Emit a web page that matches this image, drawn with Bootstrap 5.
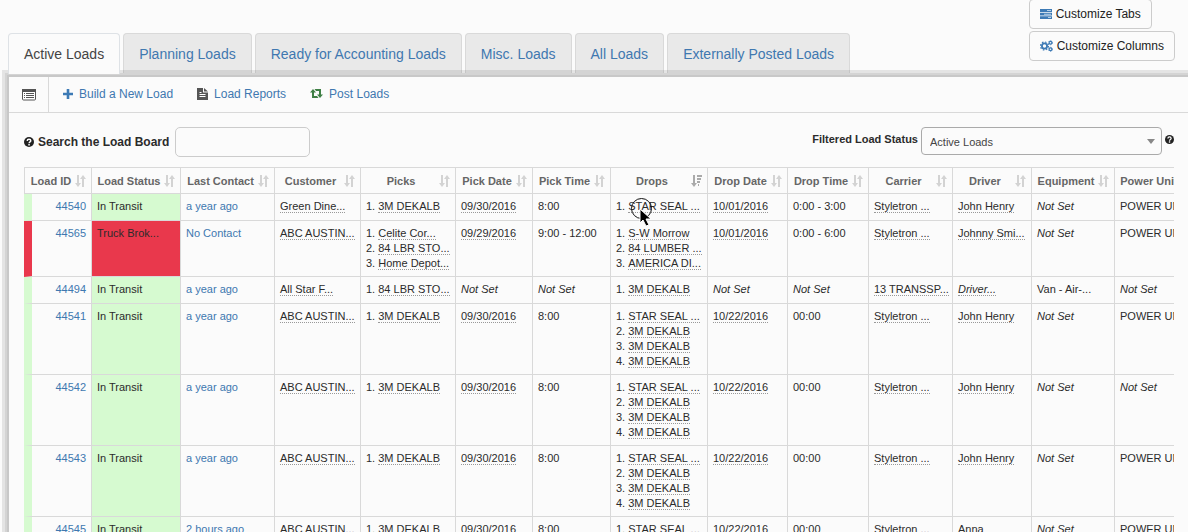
<!DOCTYPE html>
<html lang="en">
<head>
<meta charset="utf-8">
<meta name="viewport" content="width=device-width, initial-scale=1">
<title>Load Board</title>
<link rel="stylesheet" href="https://cdn.jsdelivr.net/npm/bootstrap@5.3.0/dist/css/bootstrap.min.css">
<style>
:root { --line: #d9d9d9; --link: #4078b0; --ink: #2b2b2b; --paper: #fbfbfb; }
body { font: 12px/16px "Liberation Sans", Arial, sans-serif; color: var(--ink); background: var(--paper); height: 100vh; overflow: hidden; }
a { color: var(--link); text-decoration: none; }
.board-head { margin-top: -1px; padding: 0 13px 0 8px; }
.board-tabs { gap: 3px; border: 0; padding-top: 34px; }
.board-tabs .nav-link { font-size: 14px; line-height: 20px; padding: 10px 15px 12px; margin: 0; color: var(--link); background: #e9e9e9; border: 1px solid var(--line); border-bottom: 0; border-radius: 4px 4px 0 0; }
.board-tabs .nav-link.active { position: relative; z-index: 2; color: #444; background: var(--paper); margin-bottom: 2px; padding-bottom: 10px; }
.custom-btns { gap: 2px; }
.custom-btns .btn { height: 30px; font-size: 12px; line-height: 16px; padding: 0 10px; border: 1px solid #ccc; border-radius: 4px; background: var(--paper); color: #222; gap: 4px; }
.board-panel { position: relative; z-index: 1; margin-left: 9px; margin-top: 1px; background: var(--paper); box-shadow: 0 0 0 2px #c8c8c8, 0 0 0 4px #d4d4d4, 0 0 0 7px rgba(0,0,0,.09); min-height: 100vh; }
.tool-row { height: 36px; border-bottom: 1px solid var(--line); }
.tool-row .list-btn { width: 40px; border: 0; border-right: 1px solid var(--line); border-radius: 0; padding: 0; }
.tool-row .tool-links { gap: 24px; padding: 0 0 2px 14px; }
.tool-row .tool-links a { gap: 6px; }
.board-body { padding: 14px 14px 0 15px; }
.filter-row { margin-bottom: 10px; height: 30px; }
.search-box { width: 135px; height: 30px; font-size: 12px; border: 1px solid #ccc; border-radius: 5px; background: var(--paper); margin-left: 6px; }
.status-group { font-size: 11px; gap: 3px; }
.status-pick { width: 241px; height: 28px; font-size: 11px; line-height: 16px; padding: 3px 24px 1px 8px; color: #444; background-color: var(--paper); border: 1px solid #aaa; border-radius: 4px; background-image: url("data:image/svg+xml,%3Csvg xmlns='http://www.w3.org/2000/svg' viewBox='0 0 8 5'%3E%3Cpath fill='%23888' d='M0 0h8L4 5z'/%3E%3C/svg%3E"); background-size: 8px 5px; background-position: right 6px top 11px; background-repeat: no-repeat; }
.load-grid { table-layout: fixed; width: 1174px; border-collapse: separate; border-spacing: 0; font-size: 11px; line-height: 15px; }
.load-grid th { height: 27px; padding: 1px 5px 0 4px; border: solid var(--line); border-width: 1px 1px 1px 0; color: #666; white-space: nowrap; }
.load-grid th:first-child { border-left-width: 1px; }
.load-grid th div { gap: 2px; }
.load-grid td { height: 27px; padding: 5px; vertical-align: top; border: solid var(--line); border-width: 0 1px 1px 0; white-space: nowrap; position: relative; }
.load-grid td:first-child { text-align: right; border-left: 8px solid #d6fad0; }
.load-grid .late td:first-child { border-left-color: #e9384c; }
.load-grid td:nth-child(2) { background: #d6fad0; }
.load-grid .late td:nth-child(2) { background: #e9384c; }
.load-grid .dotted { border-bottom: 1px dotted #999; }
.load-grid ol { list-style-position: inside; margin: 0; padding: 0; }
.load-grid th svg { color: #d3d3d3; flex: none; }
.load-grid th svg.sorted { color: #aaa; }
.pointer { position: absolute; left: 18px; top: 2px; }
</style>
</head>
<body>
<svg class="d-none">
  <symbol id="sort" viewBox="0 0 11 12"><path fill="currentColor" d="M2 0h2v8h2l-3 4-3-4h2zM7 12h2V4h2L8 0 5 4h2z"/></symbol>
  <symbol id="sort-desc" viewBox="0 0 11 12"><path fill="currentColor" d="M2 0h2v8h2l-3 4-3-4h2zM6 0h5v2H6zM6 3h4v2H6zM6 6h3v2H6zM7 9h1v2H7z"/></symbol>
  <symbol id="help" viewBox="0 0 10 10"><circle cx="5" cy="5" r="5" fill="#222"/><path d="M3.2 3.9c0-2.3 3.6-2.2 3.6-.1C6.8 5 5.1 4.9 5.1 6.3" fill="none" stroke="#fff" stroke-width="1.4"/><path d="M4.3 7h1.5v1.5H4.3z" fill="#fff"/></symbol>
</svg>

<header class="board-head d-flex justify-content-between align-items-start">
  <ul class="nav nav-tabs board-tabs flex-nowrap text-nowrap">
    <li class="nav-item"><a class="nav-link active" aria-current="page" href="#">Active Loads</a></li>
    <li class="nav-item"><a class="nav-link" href="#">Planning Loads</a></li>
    <li class="nav-item"><a class="nav-link" href="#">Ready for Accounting Loads</a></li>
    <li class="nav-item"><a class="nav-link" href="#">Misc. Loads</a></li>
    <li class="nav-item"><a class="nav-link" href="#">All Loads</a></li>
    <li class="nav-item"><a class="nav-link" href="#">Externally Posted Loads</a></li>
  </ul>
  <div class="custom-btns d-flex flex-column align-items-start text-nowrap">
    <button type="button" class="btn d-flex align-items-center">
      <svg width="12" height="10" viewBox="0 0 12 10"><path fill="#3d7ab5" d="M0 0h12v3H0zM0 3.7h12v2.8H0zM0 7.2h12V10H0z"/><path fill="#b5d0e8" d="M7 1h4v1H7zM4 4.7h7v1H4zM8 8.1h3v1H8z"/></svg>
      Customize Tabs
    </button>
    <button type="button" class="btn d-flex align-items-center">
      <svg width="13" height="12" viewBox="0 0 13 12" fill="none" stroke="#3d7ab5"><circle cx="4.5" cy="6" r="2.6" stroke-width="1.8"/><circle cx="4.5" cy="6" r="4" stroke-width="1.2" stroke-dasharray="1.57 1.57"/><circle cx="10.5" cy="2.7" r="1.4" stroke-width="1.2"/><circle cx="10.5" cy="2.7" r="2.1" stroke-width=".7" stroke-dasharray="1.1 1.1"/><circle cx="10.5" cy="9.3" r="1.4" stroke-width="1.2"/><circle cx="10.5" cy="9.3" r="2.1" stroke-width=".7" stroke-dasharray="1.1 1.1"/></svg>
      Customize Columns
    </button>
  </div>
</header>

<main class="board-panel">
  <div class="tool-row d-flex align-items-stretch">
    <button type="button" class="btn list-btn d-flex align-items-center justify-content-center" aria-label="List view">
      <svg width="14" height="12" viewBox="0 0 14 12"><rect x=".5" y=".5" width="13" height="10.5" rx="1" fill="#fff" stroke="#555"/><path fill="#555" d="M0 0h14v3H0zM2 4h1v1H2zM4 4h8v1H4zM2 6h1v1H2zM4 6h8v1H4zM2 8h1v1H2zM4 8h8v1H4z"/></svg>
    </button>
    <nav class="tool-links d-flex align-items-center text-nowrap" aria-label="Load tools">
      <a class="d-flex align-items-center" href="#"><svg width="10" height="10" viewBox="0 0 10 10"><path fill="#3d7ab5" d="M3.7 0h2.6v3.7H10v2.6H6.3V10H3.7V6.3H0V3.7h3.7z"/></svg>Build a New Load</a>
      <a class="d-flex align-items-center" href="#"><svg width="11" height="12" viewBox="0 0 11 12"><path fill="#555" d="M0 0h6v4.5h5V12H0zM7 0l4 3.5H7z"/><path stroke="#fff" d="M2.5 6.5h6M2.5 8.5h6M2.5 4.5h2"/></svg>Load Reports</a>
      <a class="d-flex align-items-center" href="#"><svg width="13" height="9" viewBox="0 0 13 9"><path fill="#3f7f45" d="M3 0l3 3.5H4V7h3l1.5 2H2V3.500H0zM10 9 7 5.500h2V2H6L4.500 0H11v5.500h2z"/></svg>Post Loads</a>
    </nav>
  </div>

  <div class="board-body">
    <div class="filter-row d-flex justify-content-between align-items-start text-nowrap">
      <div class="d-flex align-items-center">
        <svg class="me-1" width="10" height="10"><use href="#help"/></svg>
        <label class="fw-bold" for="search">Search the Load Board</label>
        <input class="form-control search-box" type="text" id="search">
      </div>
      <div class="status-group d-flex align-items-center">
        <label class="fw-bold mb-1" for="status">Filtered Load Status</label>
        <select class="form-select status-pick" id="status"><option>Active Loads</option></select>
        <svg class="mb-1" width="9" height="9" viewBox="0 0 10 10"><use href="#help" width="10" height="10"/></svg>
      </div>
    </div>
    <div class="overflow-hidden">
      <table class="load-grid">
        <colgroup id="cols"></colgroup>
        <thead><tr id="heads"></tr></thead>
        <tbody id="loads"></tbody>
      </table>
    </div>
  </div>
</main>

<script src="https://cdn.jsdelivr.net/npm/bootstrap@5.3.0/dist/js/bootstrap.bundle.min.js"></script>
<script>
const columns = [["Load ID", 68], ["Load Status", 89], ["Last Contact", 94], ["Customer", 86], ["Picks", 95], ["Pick Date", 77], ["Pick Time", 78], ["Drops", 97], ["Drop Date", 80], ["Drop Time", 81], ["Carrier", 84], ["Driver", 79], ["Equipment", 83], ["Power Unit", 83]];
const star = ["STAR SEAL ...", "3M DEKALB", "3M DEKALB", "3M DEKALB"];
const none = "Not Set", abc = "ABC AUSTIN...", unit = "POWER UNIT";
const loads = [
  ["44540", "In Transit", "a year ago", "Green Dine...", ["3M DEKALB"], "09/30/2016", "8:00", ["STAR SEAL ..."], "10/01/2016", "0:00 - 3:00", "Styletron ...", "John Henry", none, unit],
  ["44565", "Truck Brok...", "No Contact", abc, ["Celite Cor...", "84 LBR STO...", "Home Depot..."], "09/29/2016", "9:00 - 12:00", ["S-W Morrow", "84 LUMBER ...", "AMERICA DI..."], "10/01/2016", "0:00 - 6:00", "Styletron ...", "Johnny Smi...", none, unit],
  ["44494", "In Transit", "a year ago", "All Star F...", ["84 LBR STO..."], none, none, ["3M DEKALB"], none, none, "13 TRANSSP...", "Driver...", "Van - Air-...", none],
  ["44541", "In Transit", "a year ago", abc, ["3M DEKALB"], "09/30/2016", "8:00", star, "10/22/2016", "00:00", "Styletron ...", "John Henry", none, unit],
  ["44542", "In Transit", "a year ago", abc, ["3M DEKALB"], "09/30/2016", "8:00", star, "10/22/2016", "00:00", "Styletron ...", "John Henry", none, none],
  ["44543", "In Transit", "a year ago", abc, ["3M DEKALB"], "09/30/2016", "8:00", star, "10/22/2016", "00:00", "Styletron ...", "John Henry", none, unit],
  ["44545", "In Transit", "2 hours ago", abc, ["3M DEKALB"], "09/30/2016", "8:00", star, "10/22/2016", "00:00", "Styletron ...", "Anna", none, unit]
];
const linked = [0, 2], dotted = [3, 5, 8, 10, 11];
const pointer = '<svg class="pointer" width="26" height="32" viewBox="0 0 26 32"><circle cx="12.5" cy="12.5" r="10" fill="none" stroke="#111"/><path d="M11 13v14l3-3 3 6 3-1-3-6h5z" fill="#000" stroke="#fff"/></svg>';

function cell(value, col) {
  if (Array.isArray(value)) return "<ol>" + value.map(v => `<li><span class="dotted">${v}</span></li>`).join("") + "</ol>";
  if (value === none) return `<i>${value}</i>`;
  if (value === "Driver...") return `<i class="dotted">${value}</i>`;
  if (linked.includes(col)) return `<a href="#">${value}</a>`;
  return dotted.includes(col) ? `<span class="dotted">${value}</span>` : value;
}
document.getElementById("cols").innerHTML = columns.map(c => `<col style="width:${c[1]}px">`).join("");
document.getElementById("heads").innerHTML = columns.map(([name]) => {
  const sorted = name === "Drops";
  return `<th scope="col"><div class="d-flex align-items-center"><span class="flex-fill text-center">${name}</span><svg class="${sorted ? "sorted" : ""}" width="11" height="12"><use href="#${sorted ? "sort-desc" : "sort"}"/></svg></div></th>`;
}).join("");
document.getElementById("loads").innerHTML = loads.map((load, r) =>
  `<tr class="${load[1] === "In Transit" ? "" : "late"}">` + load.map((v, c) => `<td>${cell(v, c)}${r === 0 && c === 7 ? pointer : ""}</td>`).join("") + "</tr>").join("");
</script>
</body>
</html>
